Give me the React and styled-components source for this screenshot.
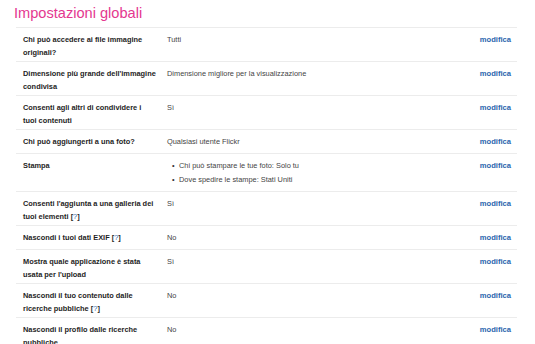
import React from 'react'
import styled, { createGlobalStyle } from 'styled-components'

const GlobalStyle = createGlobalStyle`
  body {
    margin: 0;
    background: #fff;
    font-family: "Liberation Sans", Arial, sans-serif;
  }
`;

const Page = styled.div`
    padding: 4px 18px 0 14px;
`;

const Title = styled.h2`
    margin: 0 0 5px 0;
    font-size: 14.6px;
    font-weight: normal;
    line-height: 18px;
    color: #e4378f;
`;

const Table = styled.div`
    margin-left: 2px;
`;

const Row = styled.div`
    display: grid;
    grid-template-columns: 144px 1fr auto;
    min-height: 24px;
    box-sizing: border-box;
    padding: 5px 6px 2px 7px;
    border-top: 1px solid #ececec;
    font-size: 7.4px;
    line-height: 13px;
`;

// the label lines are broken where the original page breaks them
const Label = styled.div`
    font-size: 7.4px;
    font-weight: bold;
    color: #1e1e1e;
    white-space: pre-line;
`;

const Value = styled.div`
    color: #444;
`;

const Edit = styled.a`
    font-size: 7.6px;
    font-weight: bold;
    color: #2a65ad;
    text-decoration: none;
`;

const Help = styled.span`
    color: #2a65ad;
    font-weight: normal;
`;

const Bullets = styled.ul`
    margin: 0 0 2px 0;
    padding-left: 12px;
    list-style: none;
    line-height: 14px;
`;

const Bullet = styled.li`
    position: relative;
    &::before {
        content: "•";
        position: absolute;
        left: -7px;
        color: #333;
    }
`;

const Q = () => <>[<Help>?</Help>]</>

const settings = [
    { label: 'Chi può accedere ai file immagine\noriginali?', value: 'Tutti' },
    { label: "Dimensione più grande dell'immagine\ncondivisa", value: 'Dimensione migliore per la visualizzazione' },
    { label: 'Consenti agli altri di condividere i\ntuoi contenuti', value: 'Sì' },
    { label: 'Chi può aggiungerti a una foto?', value: 'Qualsiasi utente Flickr' },
    { label: 'Stampa', list: ['Chi può stampare le tue foto: Solo tu', 'Dove spedire le stampe: Stati Uniti'] },
    { label: <>{"Consenti l'aggiunta a una galleria dei\ntuoi elementi "}<Q /></>, value: 'Sì' },
    { label: <>Nascondi i tuoi dati EXIF <Q /></>, value: 'No' },
    { label: "Mostra quale applicazione è stata\nusata per l'upload", value: 'Sì' },
    { label: <>{'Nascondi il tuo contenuto dalle\nricerche pubbliche '}<Q /></>, value: 'No' },
    { label: 'Nascondi il profilo dalle ricerche\npubbliche', value: 'No' },
]

export default function App() {
    return (
        <Page>
            <GlobalStyle />
            <Title>Impostazioni globali</Title>
            <Table>
                {settings.map((s, i) => (
                    <Row key={i}>
                        <Label>{s.label}</Label>
                        <Value>
                            {s.list ? (
                                <Bullets>
                                    {s.list.map(t => <Bullet key={t}>{t}</Bullet>)}
                                </Bullets>
                            ) : s.value}
                        </Value>
                        <Edit href="#">modifica</Edit>
                    </Row>
                ))}
            </Table>
        </Page>
    )
}
